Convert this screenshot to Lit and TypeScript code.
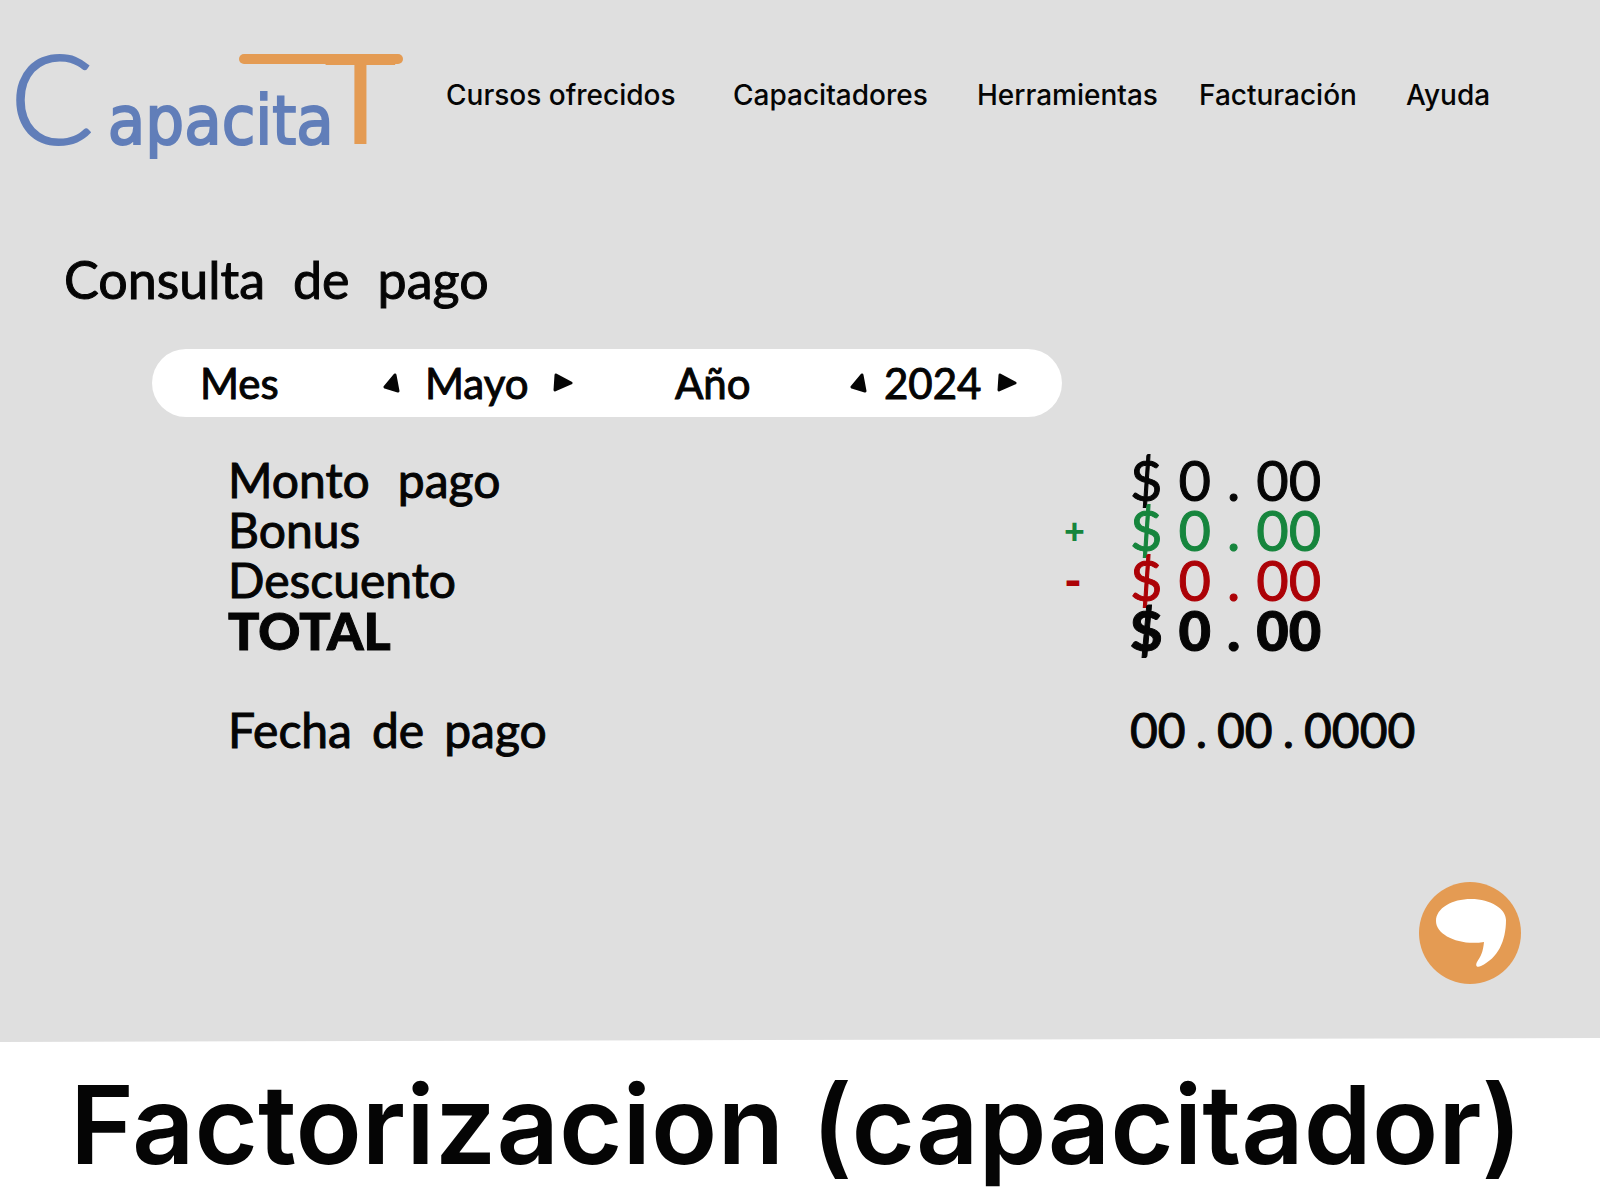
import { LitElement, html, css } from "lit";
import { customElement, state } from "lit/decorators.js";

const MONTHS = ["Enero", "Febrero", "Marzo", "Abril", "Mayo", "Junio", "Julio", "Agosto", "Septiembre", "Octubre", "Noviembre", "Diciembre"];
const LINKS = ["Cursos ofrecidos", "Capacitadores", "Herramientas", "Facturación", "Ayuda"];

interface Line {
  label: string;
  sign: string;
  kind: string;
  value: string[];
}

const LINES: Line[] = [
  { label: "Monto pago", sign: "", kind: "amount", value: ["$", "0", ".", "00"] },
  { label: "Bonus", sign: "+", kind: "amount bonus", value: ["$", "0", ".", "00"] },
  { label: "Descuento", sign: "-", kind: "amount discount", value: ["$", "0", ".", "00"] },
  { label: "TOTAL", sign: "", kind: "amount total", value: ["$", "0", ".", "00"] },
  { label: "Fecha de pago", sign: "", kind: "date", value: ["00", ".", "00", ".", "0000"] },
];

@customElement("brand-logo")
export class BrandLogo extends LitElement {
  static styles = css`
    .logo {
      position: relative;
      display: flex;
      align-items: baseline;
      color: #617eb9;
      text-decoration: none;
    }
    .initial { font: 300 124px/144px Lato, sans-serif; -webkit-text-stroke: 2px #617eb9; }
    .middle { font: 400 68px/144px "DejaVu Sans Condensed", "DejaVu Sans", sans-serif; margin-left: 14px; -webkit-text-stroke: 2px #617eb9; }
    .last { font: 400 124px/144px Lato, sans-serif; color: #e49b53; margin-left: -10px; }
    .bar {
      position: absolute;
      right: -6px;
      top: 30px;
      width: 164px;
      height: 10px;
      border-radius: 5px;
      background: #e49b53;
    }
  `;
  render() {
    return html`<a class="logo" href="#inicio"><span class="initial">C</span><span class="middle">apacita</span><span class="last">T</span><span class="bar"></span></a>`;
  }
}

@customElement("value-stepper")
export class ValueStepper extends LitElement {
  static properties = { value: {}, name: {} };
  declare value: string;
  declare name: string;
  static styles = css`
    .stepper { display: flex; align-items: center; gap: var(--stepper-gap, 16px); }
    .arrow { border: 0; padding: 0; background: none; display: flex; cursor: pointer; }
    .value { font: 400 42px/68px Lato, sans-serif; -webkit-text-stroke: 1px #050505; }
  `;
  private step(by: number) {
    this.dispatchEvent(new CustomEvent("step", { detail: by }));
  }
  render() {
    return html`<div class="stepper">
      <button class="arrow" aria-label="${this.name} anterior" @click=${() => this.step(-1)}>
        <svg width="18" height="20" viewBox="0 0 18 20"><path d="M12 2 L2 14 L15 18 Z" fill="#050505" stroke="#050505" stroke-width="3" stroke-linejoin="round"/></svg>
      </button>
      <output class="value">${this.value}</output>
      <button class="arrow" aria-label="${this.name} siguiente" @click=${() => this.step(1)}>
        <svg width="20" height="20" viewBox="0 0 20 20"><path d="M3 2 L18 10 L2 17 Z" fill="#050505" stroke="#050505" stroke-width="3" stroke-linejoin="round"/></svg>
      </button>
    </div>`;
  }
}

@customElement("app-root")
export class AppRoot extends LitElement {
  @state() month = 4;
  @state() year = 2024;

  static styles = css`
    :host { display: block; color: #050505; font-family: Lato, sans-serif; }
    .page { display: flex; flex-direction: column; min-height: 100vh; background: #dfdfdf; }
    .header { display: flex; align-items: flex-start; padding: 24px 0 0 10px; }
    .brand { flex: none; width: 436px; display: flex; }
    .nav {
      flex: 1;
      display: grid;
      grid-template-columns: 287fr 244fr 222fr 207fr 194fr;
      padding-top: 54px;
      font: 500 28px/34px Inter, sans-serif;
    }
    .link { color: inherit; text-decoration: none; white-space: nowrap; }
    .main { flex: 1; display: flex; flex-direction: column; }
    .title {
      display: flex;
      gap: 28px;
      margin: 56px 0 0 64px;
      font-weight: 400;
      font-size: 52px;
      line-height: 60px;
      -webkit-text-stroke: 1px #050505;
    }
    .period {
      display: grid;
      grid-template-columns: 183fr 292fr 175fr 212fr;
      align-items: center;
      margin: 40px 33.625% 0 9.5%;
      padding-left: 48px;
      border-radius: 34px;
      background: #fff;
      font-size: 42px;
      line-height: 68px;
    }
    .month { --stepper-gap: 24px; }
    .caption { -webkit-text-stroke: 1px #050505; }
    .lines { width: 100%; margin-top: 38px; border-collapse: collapse; table-layout: fixed; }
    .label, .sign, .value { padding: 0; text-align: left; line-height: 50px; height: 50px; }
    .label { padding-left: 228px; font-size: 48px; font-weight: 400; -webkit-text-stroke: 1px #050505; }
    .label-col { width: 66.25%; }
    .sign-col { width: 4.375%; }
    .words { display: flex; gap: 28px; }
    .sign { padding-left: 4px; font-size: 36px; font-weight: 900; }
    .parts { display: flex; gap: 16px; }
    .amount .value { font-size: 56px; -webkit-text-stroke: 1px currentColor; }
    .date .value { font-size: 48px; -webkit-text-stroke: 1px #050505; }
    .date .parts { gap: 10px; }
    .date .words { gap: 20px; }
    .date .label, .date .value { padding-top: 50px; }
    .bonus .sign, .bonus .value { color: #16853d; }
    .discount .sign, .discount .value { color: #ac0207; }
    .discount .sign { font-size: 48px; }
    .total .label { font-size: 52px; }
    .total .label, .total .value { font-weight: 900; }
    .chat {
      align-self: flex-end;
      display: flex;
      margin: 127px 79px 54px 0;
      padding: 0;
      border: 0;
      border-radius: 50%;
      background: none;
      cursor: pointer;
    }
    .footer {
      padding: 26px 0 16px 70px;
      background: #fff;
      clip-path: polygon(0 4px, 100% 0, 100% 100%, 0 100%);
    }
    .name { margin: 0; font: 600 109px/120px Inter, sans-serif; white-space: nowrap; }
  `;

  private words(text: string) {
    return text.split(" ").map((w) => html`<span>${w}</span> `);
  }

  private moveMonth(e: CustomEvent<number>) {
    this.month = (this.month + e.detail + 12) % 12;
  }

  render() {
    return html`<div class="page">
      <header class="header">
        <div class="brand"><brand-logo></brand-logo></div>
        <nav class="nav">${LINKS.map((l) => html`<a class="link" href="#">${l}</a>`)}</nav>
      </header>
      <main class="main">
        <h1 class="title">${this.words("Consulta de pago")}</h1>
        <section class="period">
          <span class="caption">Mes</span>
          <value-stepper class="month" name="Mes" .value=${MONTHS[this.month]} @step=${this.moveMonth}></value-stepper>
          <span class="caption">Año</span>
          <value-stepper name="Año" .value=${String(this.year)} @step=${(e: CustomEvent<number>) => (this.year += e.detail)}></value-stepper>
        </section>
        <table class="lines">
          <colgroup><col class="label-col" /><col class="sign-col" /><col /></colgroup>
          <tbody>
            ${LINES.map((l) => html`<tr class=${l.kind}>
              <th class="label" scope="row"><span class="words">${this.words(l.label)}</span></th>
              <td class="sign">${l.sign}</td>
              <td class="value"><span class="parts">${l.value.map((p) => html`<span>${p}</span>`)}</span></td>
            </tr>`)}
          </tbody>
        </table>
        <button class="chat" aria-label="Chat">
          <svg width="102" height="102" viewBox="0 0 102 102">
            <circle cx="51" cy="51" r="51" fill="#e49b53" />
            <path d="M52 17 C72 17 87 27 87 38 C87 59 79 76 62 84 C58 86 56 84 58 80 C62 74 64 70 65 60 C40 64 17 53 17 39 C17 26 33 17 52 17 Z" fill="#fff" />
          </svg>
        </button>
      </main>
      <footer class="footer"><h2 class="name">Factorizacion (capacitador)</h2></footer>
    </div>`;
  }
}
